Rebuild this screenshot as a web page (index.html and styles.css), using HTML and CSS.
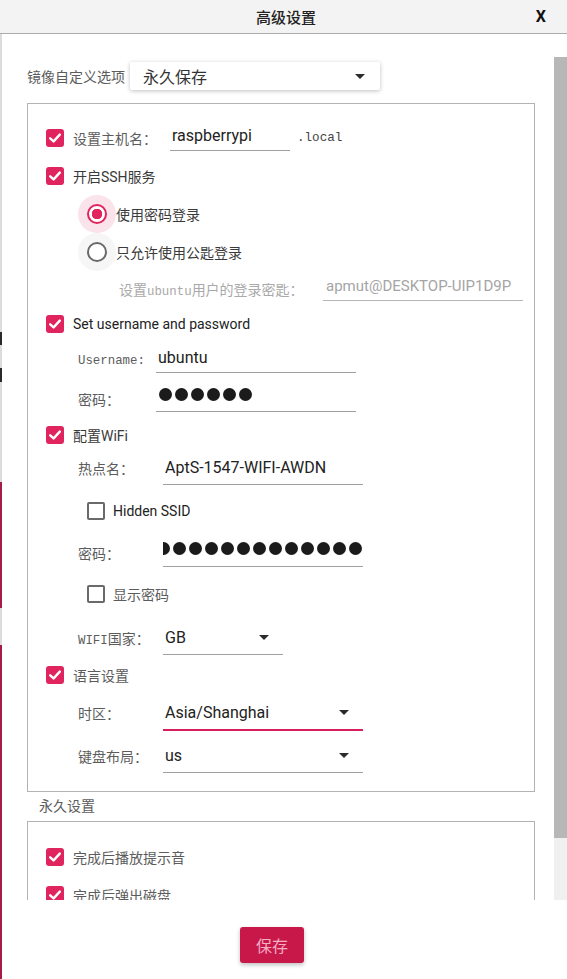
FILE: index.html
```html
<!DOCTYPE html>
<html lang="zh-CN">
<head>
    <meta charset="UTF-8">
    <meta name="viewport" content="width=device-width, initial-scale=1.0">
    <title>高级设置</title>
    <link rel="stylesheet" href="styles.css">
</head>
<body>

<div class="window">
    <header class="titlebar">
        <span class="title">高级设置</span>
        <span class="close">X</span>
    </header>

    <div class="main">
        <div class="edge"></div>

        <div class="column">
            <div class="scroll">
                <div class="content">
                    <div class="top-row">
                        <span class="label soft">镜像自定义选项</span>
                        <div class="combo raised">
                            <span>永久保存</span>
                            <i class="arrow"></i>
                        </div>
                    </div>

                    <div class="group options">
                        <div class="row check-row">
                            <span class="check on"><svg viewBox="0 0 18 18"><path d="M4.2 9.3 L7.6 12.4 L13.8 5.6"/></svg></span>
                            <span class="label soft host-label">设置主机名：</span>
                            <div class="field host">raspberrypi</div>
                            <span class="mono suffix">.local</span>
                        </div>

                        <div class="row check-row">
                            <span class="check on"><svg viewBox="0 0 18 18"><path d="M4.2 9.3 L7.6 12.4 L13.8 5.6"/></svg></span>
                            <span class="label">开启SSH服务</span>
                        </div>

                        <div class="row radio-row">
                            <span class="halo on"><span class="radio on"></span></span>
                            <span class="label">使用密码登录</span>
                        </div>

                        <div class="row radio-row">
                            <span class="halo"><span class="radio"></span></span>
                            <span class="label">只允许使用公匙登录</span>
                        </div>

                        <div class="row h36 key-row">
                            <span class="label disabled key-label">设置<span class="mono">ubuntu</span>用户的登录密匙：</span>
                            <div class="field short disabled key-field">apmut@DESKTOP-UIP1D9P</div>
                        </div>

                        <div class="row h34 check-row">
                            <span class="check on"><svg viewBox="0 0 18 18"><path d="M4.2 9.3 L7.6 12.4 L13.8 5.6"/></svg></span>
                            <span class="label latin">Set username and password</span>
                        </div>

                        <div class="row h40 sub-row">
                            <span class="label soft mono user-label">Username:</span>
                            <div class="field short user-field">ubuntu</div>
                        </div>

                        <div class="row h36 sub-row">
                            <span class="label soft user-label">密码：</span>
                            <div class="field pw user-field">
                                <div class="dots">
                                    <i></i><i></i><i></i><i></i><i></i><i></i>
                                </div>
                            </div>
                        </div>

                        <div class="row h36 check-row">
                            <span class="check on"><svg viewBox="0 0 18 18"><path d="M4.2 9.3 L7.6 12.4 L13.8 5.6"/></svg></span>
                            <span class="label">配置WiFi</span>
                        </div>

                        <div class="row h30 sub-row">
                            <span class="label soft wifi-label">热点名：</span>
                            <div class="field tall wifi-field">AptS-1547-WIFI-AWDN</div>
                        </div>

                        <div class="row h56 sub-check-row">
                            <span class="check"></span>
                            <span class="label latin">Hidden SSID</span>
                        </div>

                        <div class="row h28 sub-row">
                            <span class="label soft wifi-label">密码：</span>
                            <div class="field pw wide wifi-field">
                                <div class="dots">
                                    <i></i><i></i><i></i><i></i><i></i><i></i><i></i>
                                    <i></i><i></i><i></i><i></i><i></i><i></i>
                                </div>
                            </div>
                        </div>

                        <div class="row h54 sub-check-row">
                            <span class="check"></span>
                            <span class="label soft">显示密码</span>
                        </div>

                        <div class="row h34 sub-row">
                            <span class="label soft wifi-label"><span class="mono">WIFI</span>国家：</span>
                            <div class="field tall select country">
                                <span>GB</span>
                                <i class="arrow"></i>
                            </div>
                        </div>

                        <div class="row h40 check-row">
                            <span class="check on"><svg viewBox="0 0 18 18"><path d="M4.2 9.3 L7.6 12.4 L13.8 5.6"/></svg></span>
                            <span class="label soft">语言设置</span>
                        </div>

                        <div class="row h36 sub-row">
                            <span class="label soft wifi-label">时区：</span>
                            <div class="field tall select focus wifi-field">
                                <span>Asia/Shanghai</span>
                                <i class="arrow"></i>
                            </div>
                        </div>

                        <div class="row h50 sub-row">
                            <span class="label soft wifi-label">键盘布局：</span>
                            <div class="field tall select wifi-field">
                                <span>us</span>
                                <i class="arrow"></i>
                            </div>
                        </div>
                    </div>

                    <div class="group-title soft">永久设置</div>

                    <div class="group persist">
                        <div class="row check-row">
                            <span class="check on"><svg viewBox="0 0 18 18"><path d="M4.2 9.3 L7.6 12.4 L13.8 5.6"/></svg></span>
                            <span class="label soft">完成后播放提示音</span>
                        </div>
                        <div class="row check-row">
                            <span class="check on"><svg viewBox="0 0 18 18"><path d="M4.2 9.3 L7.6 12.4 L13.8 5.6"/></svg></span>
                            <span class="label soft">完成后弹出磁盘</span>
                        </div>
                    </div>
                </div>

                <div class="scrollbar">
                    <div class="thumb"></div>
                </div>
            </div>

            <footer class="footer">
                <button class="save">保存</button>
            </footer>
        </div>
    </div>
</div>

</body>
</html>
```

FILE: styles.css
```css
* {
    margin: 0;
    padding: 0;
    box-sizing: border-box;
}

body {
    font-family: Roboto, "Noto Sans CJK SC", sans-serif;
    background-color: #fff;
    color: #333;
    width: 567px;
    height: 979px;
    overflow: hidden;
}

.window {
    display: flex;
    flex-direction: column;
    height: 979px;
}

/* title bar */
.titlebar {
    height: 34px;
    flex-shrink: 0;
    display: flex;
    align-items: center;
    justify-content: space-between;
    padding: 0 21px 1px 256px;
    background-color: #f3f3f3;
    border-bottom: 1px solid #ababab;
}

.title {
    font-size: 15px;
    font-weight: 500;
    color: #222;
}

.close {
    font-size: 16px;
    font-weight: 700;
    color: #111;
}

.main {
    flex: 1;
    display: flex;
}

/* leftover window edges from behind the dialog */
.edge {
    width: 2px;
    flex-shrink: 0;
    background: linear-gradient(to bottom,
        #dcdcdc 0, #dcdcdc 298px,
        #2a2a2a 298px, #2a2a2a 311px,
        #dcdcdc 311px, #dcdcdc 334px,
        #2a2a2a 334px, #2a2a2a 348px,
        #dcdcdc 348px, #dcdcdc 448px,
        #a51c4c 448px, #a51c4c 574px,
        #dcdcdc 574px, #dcdcdc 611px,
        #a51c4c 611px, #a51c4c 100%);
}

.column {
    flex: 1;
    display: flex;
    flex-direction: column;
}

.scroll {
    height: 866px;
    display: flex;
    overflow: hidden;
}

.content {
    flex: 1;
    padding: 28px 0 0 25px;
}

.scrollbar {
    width: 13px;
    margin-top: 23px;
    background-color: #f0f0f0;
}

.thumb {
    height: 781px;
    background-color: #b7b7b7;
}

/* labels */
.label {
    font-size: 14px;
    color: #3a3a3a;
    white-space: nowrap;
}

.soft {
    color: #5c5c5c;
}

.disabled {
    color: #a9a9a9;
}

.latin {
    font-size: 14px;
    color: #222;
}

.mono {
    font-family: "Liberation Mono", monospace;
    font-size: 12.4px;
}

/* top combobox */
.top-row {
    display: flex;
    align-items: center;
    gap: 5px;
    height: 28px;
}

.combo {
    display: flex;
    align-items: center;
    justify-content: space-between;
    width: 250px;
    height: 28px;
    padding: 0 15px 0 13px;
    font-size: 16px;
    color: #333;
    background-color: #fff;
    border-radius: 2px;
}

.raised {
    box-shadow: 0 1px 4px rgba(0, 0, 0, 0.25);
}

.arrow {
    width: 0;
    height: 0;
    border-left: 5px solid transparent;
    border-right: 5px solid transparent;
    border-top: 5px solid #2b2b2b;
}

/* group boxes */
.group {
    width: 508px;
    border: 1px solid #b3b3b3;
}

.options {
    margin-top: 13px;
    padding: 15px 0 10px;
}

.group-title {
    height: 29px;
    line-height: 29px;
    padding-left: 12px;
    font-size: 14px;
}

.persist {
    padding-top: 16px;
    height: 120px;
}

/* rows */
.row {
    display: flex;
    align-items: center;
    height: 38px;
}

.h28 { height: 28px; }
.h30 { height: 30px; }
.h34 { height: 34px; }
.h36 { height: 36px; }
.h40 { height: 40px; }
.h50 { height: 50px; }
.h54 { height: 54px; }
.h56 { height: 56px; }

.check-row {
    padding-left: 18px;
}

.check-row .check {
    margin-right: 9px;
}

.sub-check-row {
    padding-left: 59px;
}

.sub-check-row .check {
    margin-right: 8px;
}

.radio-row {
    padding-left: 50px;
}

.key-row {
    padding-left: 91px;
}

.sub-row {
    padding-left: 50px;
}

/* checkbox */
.check {
    width: 18px;
    height: 18px;
    flex-shrink: 0;
    border: 2px solid #6a6a6a;
    border-radius: 2px;
    background-color: #fff;
}

.check.on {
    border: none;
    border-radius: 3px;
    background-color: #e0245e;
}

.check svg {
    display: block;
    width: 18px;
    height: 18px;
}

.check path {
    fill: none;
    stroke: #fff;
    stroke-width: 2.4;
    stroke-linecap: round;
    stroke-linejoin: round;
}

/* radio */
.halo {
    width: 38px;
    height: 38px;
    border-radius: 50%;
    display: flex;
    align-items: center;
    justify-content: center;
    background-color: #f6f6f6;
    flex-shrink: 0;
}

.halo.on {
    background-color: #fbe3eb;
}

.radio {
    width: 20px;
    height: 20px;
    border-radius: 50%;
    border: 2px solid #6a6a6a;
    background-color: #fff;
}

.radio.on {
    border: 2.5px solid #e0245e;
    background: radial-gradient(circle, #e0245e 0, #e0245e 5px, #fff 5.5px);
}

/* text fields */
.field {
    display: flex;
    align-items: center;
    height: 26px;
    padding: 0 0 5px 2px;
    font-size: 16px;
    color: #222;
    border-bottom: 1px solid #a0a0a0;
    white-space: nowrap;
}

.field.short {
    height: 24px;
    padding-bottom: 6px;
}

.field.tall {
    height: 34px;
    padding-bottom: 0;
}

.field.pw {
    padding: 0 0 8px 3px;
}

.field.wide {
    height: 28px;
    justify-content: flex-end;
    padding: 0 1px 8px 0;
    overflow: hidden;
}

.field.select {
    justify-content: space-between;
    padding-right: 14px;
}

.field.focus {
    height: 36px;
    border-bottom: 2px solid #d81e5b;
}

.field.disabled {
    color: #a5a5a5;
    border-bottom-color: #b5b5b5;
}

.host-label {
    width: 97px;
}

.host {
    width: 120px;
}

.suffix {
    margin-left: 7px;
    color: #444;
    font-size: 12.6px;
}

.key-label {
    width: 204px;
}

.key-field {
    width: 200px;
    font-size: 15px;
    padding-left: 3px;
}

.user-label {
    width: 78px;
}

.user-field {
    width: 200px;
}

.wifi-label {
    width: 85px;
}

.wifi-field {
    width: 200px;
}

.country {
    width: 120px;
}

.dots {
    display: flex;
    gap: 3px;
    flex-shrink: 0;
}

.dots i {
    width: 13px;
    height: 13px;
    border-radius: 50%;
    background-color: #1b1b1b;
}

/* footer */
.footer {
    flex: 1;
    padding: 27px 0 0 238px;
}

.save {
    width: 64px;
    height: 36px;
    font-family: "Noto Sans CJK SC", sans-serif;
    font-size: 16px;
    color: #f4aec3;
    background-color: #c8184a;
    border: none;
    border-radius: 3px;
    box-shadow: 0 2px 4px rgba(0, 0, 0, 0.25);
}
```
